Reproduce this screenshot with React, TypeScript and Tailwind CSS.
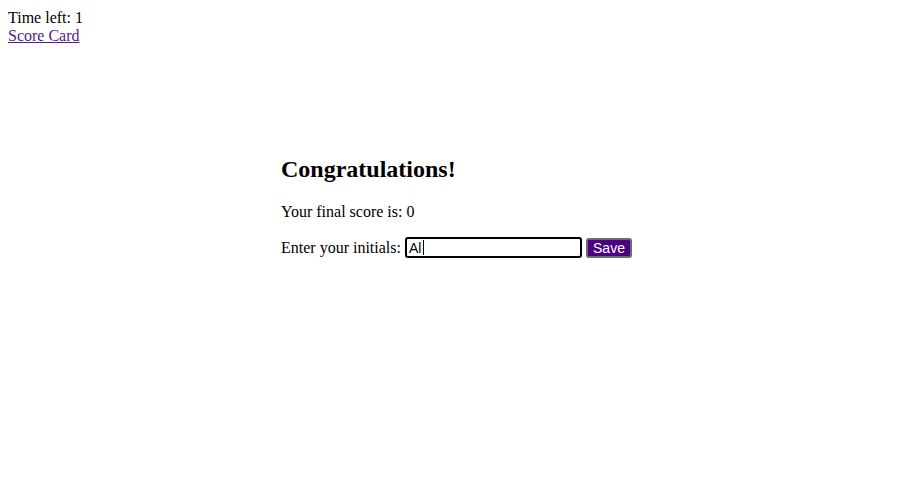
import React from 'react';

const App: React.FC = () => {
  return (
    <div className="min-h-screen bg-white px-2 pt-[9px] font-['Liberation_Serif',serif] text-base leading-[18px] text-black">
      <div>Time left: 1</div>
      <a href="#" className="text-[#551a8b] underline">
        Score Card
      </a>

      <div className="mx-auto mt-[111px] w-[343px]">
        <h2 className="mb-5 text-2xl leading-[27px] font-bold">Congratulations!</h2>
        <p className="mb-4">Your final score is: 0</p>
        <p className="flex items-center whitespace-nowrap">
          <span className="shrink-0">Enter your initials:</span>
          <span className="relative ml-1 shrink-0">
            <input
              type="text"
              defaultValue="Al"
              className="block h-[21px] w-[177px] rounded-[3px] border-2 border-black px-[2px] font-['Liberation_Sans',sans-serif] text-[14px] text-black outline-none"
            />
            {/* text caret */}
            <span className="absolute top-[3px] left-[18px] h-[15px] w-px bg-black" />
          </span>
          <button className="ml-1 h-[20px] w-[46px] shrink-0 rounded-[3px] border-2 border-[#6b6b6b] bg-[#4b0082] font-['Liberation_Sans',sans-serif] text-[14px] leading-none text-white">
            Save
          </button>
        </p>
      </div>
    </div>
  );
};

export default App;
